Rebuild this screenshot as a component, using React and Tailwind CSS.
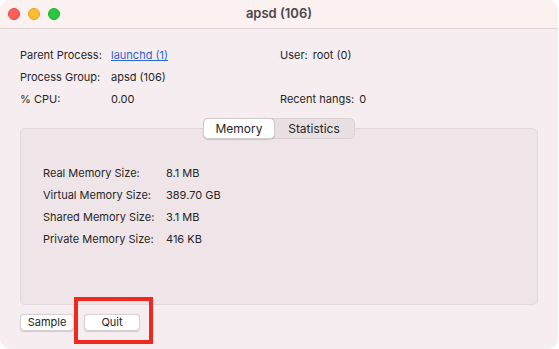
import React from "react";

const infoRows = [
  { label: "Parent Process:", value: "launchd (1)", link: true, rightLabel: "User:", rightValue: "root (0)" },
  { label: "Process Group:", value: "apsd (106)" },
  { label: "% CPU:", value: "0.00", rightLabel: "Recent hangs:", rightValue: "0" },
];

const memoryRows = [
  { label: "Real Memory Size:", value: "8.1 MB" },
  { label: "Virtual Memory Size:", value: "389.70 GB" },
  { label: "Shared Memory Size:", value: "3.1 MB" },
  { label: "Private Memory Size:", value: "416 KB" },
];

export default function App() {
  return (
    <div className="w-[559px] h-[349px] bg-white font-['Inter','Liberation_Sans',sans-serif] text-[#262626]">
      <div className="w-[558px] h-[349px] bg-[#f6edf0] rounded-[10px] overflow-hidden flex flex-col relative">
        {/* title bar */}
        <div className="h-[29px] bg-[#fbf1f1] border-b border-[#ddd3d5] flex items-center px-[8px] relative">
          <div className="flex gap-[8px]">
            <span className="w-[12px] h-[12px] rounded-full bg-[#fe5f57] border border-[#e2473f]" />
            <span className="w-[12px] h-[12px] rounded-full bg-[#febc2e] border border-[#dfa023]" />
            <span className="w-[12px] h-[12px] rounded-full bg-[#28c840] border border-[#1eab2f]" />
          </div>
          <div className="absolute inset-0 flex items-center justify-center text-[13px] font-semibold text-[#4c4749]">
            apsd (106)
          </div>
        </div>

        {/* info */}
        <div className="flex flex-col pt-[15px] px-[20px] text-[11px]">
          {infoRows.map((r) => (
            <div key={r.label} className="h-[22px] flex items-center">
              <span className="w-[91px]">{r.label}</span>
              <span className={`w-[169px] ${r.link ? "text-[#2c66d3] underline" : ""}`}>{r.value}</span>
              {r.rightLabel && (
                <span>
                  {r.rightLabel}
                  <span className="ml-[5px]">{r.rightValue}</span>
                </span>
              )}
            </div>
          ))}
        </div>

        {/* tab view */}
        <div className="relative mt-[18px] mx-[20px]">
          <div className="absolute left-0 right-0 -top-[10px] flex justify-center">
            <div className="flex h-[21px] rounded-[5px] bg-[#e8dfe2] border border-[#dcd2d5] text-[12px]">
              <div className="w-[72px] flex items-center justify-center bg-white rounded-[5px] border border-[#d3cacd] -m-px shadow-[0_0.5px_1px_rgba(0,0,0,0.15)]">
                Memory
              </div>
              <div className="w-[80px] flex items-center justify-center">Statistics</div>
            </div>
          </div>
          <div className="h-[177px] bg-[#efe5e8] border border-[#e2d8db] rounded-[5px] pt-[33px] pl-[22px] text-[11px]">
            {memoryRows.map((r) => (
              <div key={r.label} className="h-[22px] flex items-center">
                <span className="w-[123px]">{r.label}</span>
                <span>{r.value}</span>
              </div>
            ))}
          </div>
        </div>

        {/* buttons */}
        <div className="flex gap-[10px] px-[20px] mt-[9px] text-[11px]">
          <button className="h-[17px] w-[54px] bg-white rounded-[4px] border border-[#d9d0d3] shadow-[0_0.5px_1px_rgba(0,0,0,0.15)] flex items-center justify-center">
            Sample
          </button>
          <div className="relative">
            <button className="h-[17px] w-[56px] bg-white rounded-[4px] border border-[#d9d0d3] shadow-[0_0.5px_1px_rgba(0,0,0,0.15)] flex items-center justify-center">
              Quit
            </button>
            <div className="absolute left-[-10px] top-[-17px] w-[79px] h-[47px] border-[4px] border-[#ee2a1f] pointer-events-none" />
          </div>
        </div>
      </div>
    </div>
  );
}
